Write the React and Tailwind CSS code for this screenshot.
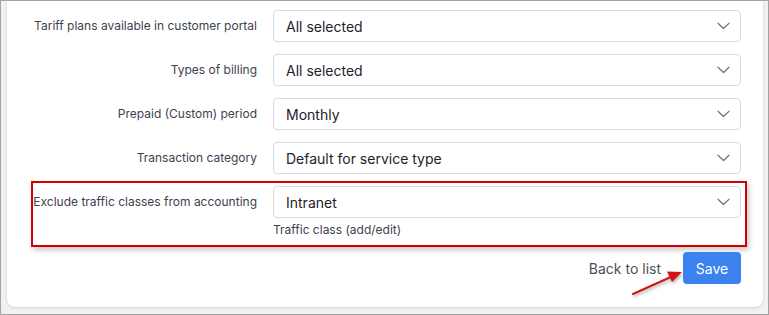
import React from 'react';

function Chevron() {
  return (
    <svg width="13" height="8" viewBox="0 0 13 8" fill="none" className="shrink-0">
      <path d="M1 1.2l5.5 5.3L12 1.2" stroke="#6b7280" strokeWidth="1.2" strokeLinecap="round" strokeLinejoin="round" />
    </svg>
  );
}

function SelectBox({ value }) {
  return (
    <div className="flex-1 h-8 flex items-center justify-between border border-[#d6d9de] rounded-[4px] bg-white pl-[12px] pr-[10px]">
      <span className="text-[14px] text-[#1f2229]">{value}</span>
      <Chevron />
    </div>
  );
}

function FormRow({ label, value }) {
  return (
    <div className="flex items-center">
      <label className="w-[240px] pr-4 text-right text-[12px] text-[#3d4250] leading-4 whitespace-nowrap">{label}</label>
      <SelectBox value={value} />
    </div>
  );
}

const rows = [
  { label: 'Tariff plans available in customer portal', value: 'All selected' },
  { label: 'Types of billing', value: 'All selected' },
  { label: 'Prepaid (Custom) period', value: 'Monthly' },
  { label: 'Transaction category', value: 'Default for service type' },
];

export default function App() {
  return (
    <div
      className="relative w-[769px] h-[315px] border border-[#a3a3a3] bg-[#f0f1f5] overflow-hidden flex flex-col"
      style={{ fontFamily: 'Inter, "Noto Sans", sans-serif' }}
    >
      <div className="bg-white ml-[6px] mr-[5px] mb-[7px] flex-1 rounded-b-[8px] shadow-[0_1px_3px_rgba(0,0,0,0.12)] pl-[26px] pr-[22px] pt-[9px]">
        <div className="flex flex-col gap-3">
          {rows.map((r) => (
            <FormRow key={r.label} label={r.label} value={r.value} />
          ))}
        </div>

        {/* highlighted row */}
        <div className="mt-[7px] ml-[-2px] mr-[-6px] border-2 border-[#d40000] pt-[3px] pr-[4px] pb-[7px] shadow-[2px_3px_5px_rgba(0,0,0,0.22)]">
          <div className="flex items-center">
            <label className="w-[240px] pr-4 text-right text-[12px] text-[#3d4250] leading-4 whitespace-nowrap">
              Exclude traffic classes from accounting
            </label>
            <SelectBox value="Intranet" />
          </div>
          <div className="pl-[240px] mt-[4px] text-[12px] leading-4 text-[#3d4250]">Traffic class (add/edit)</div>
        </div>

        <div className="flex justify-end items-center mt-[5px] gap-[22px]">
          <span className="text-[14px] text-[#4a4f5c]">Back to list</span>
          <button className="h-8 w-[58px] rounded-[4px] bg-[#3b82f0] text-white text-[14px]">Save</button>
        </div>
      </div>

      <svg className="absolute left-0 top-0 pointer-events-none" width="769" height="315" style={{ filter: 'drop-shadow(1px 2px 1.5px rgba(0,0,0,0.3))' }}>
        <line x1="632" y1="293" x2="672" y2="275" stroke="#d41414" strokeWidth="2" strokeLinecap="round" />
        <polygon points="681,271 666,270.5 671,281" fill="#d41414" />
      </svg>
    </div>
  );
}
